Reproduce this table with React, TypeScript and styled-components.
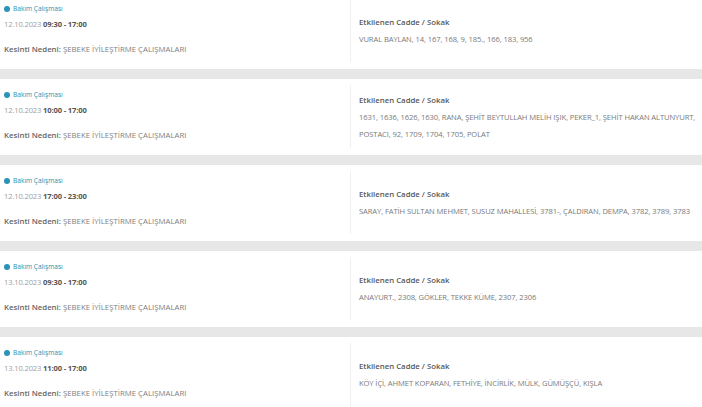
import { FC } from "react";
import styled, { createGlobalStyle } from "styled-components";

type Outage = {
  date: string;
  time: string;
  reason: string;
  streets: string;
};

const outages: Outage[] = [
  {
    date: "12.10.2023",
    time: "09:30 - 17:00",
    reason: "ŞEBEKE İYİLEŞTİRME ÇALIŞMALARI",
    streets: "VURAL BAYLAN, 14, 167, 168, 9, 185., 166, 183, 956",
  },
  {
    date: "12.10.2023",
    time: "10:00 - 17:00",
    reason: "ŞEBEKE İYİLEŞTİRME ÇALIŞMALARI",
    streets:
      "1631, 1636, 1626, 1630, RANA, ŞEHİT BEYTULLAH MELİH IŞIK, PEKER_1, ŞEHİT HAKAN ALTUNYURT, POSTACI, 92, 1709, 1704, 1705, POLAT",
  },
  {
    date: "12.10.2023",
    time: "17:00 - 23:00",
    reason: "ŞEBEKE İYİLEŞTİRME ÇALIŞMALARI",
    streets:
      "SARAY, FATİH SULTAN MEHMET, SUSUZ MAHALLESİ, 3781-, ÇALDIRAN, DEMPA, 3782, 3789, 3783",
  },
  {
    date: "13.10.2023",
    time: "09:30 - 17:00",
    reason: "ŞEBEKE İYİLEŞTİRME ÇALIŞMALARI",
    streets: "ANAYURT., 2308, GÖKLER, TEKKE KÜME, 2307, 2306",
  },
  {
    date: "13.10.2023",
    time: "11:00 - 17:00",
    reason: "ŞEBEKE İYİLEŞTİRME ÇALIŞMALARI",
    streets: "KÖY İÇİ, AHMET KOPARAN, FETHİYE, İNCİRLİK, MÜLK, GÜMÜŞÇÜ, KIŞLA",
  },
];

const OutageCard: FC<{ item: Outage }> = ({ item }) => (
  <Card>
    <Info>
      <Type>
        <Dot />
        Bakım Çalışması
      </Type>
      <When>
        {item.date} <b>{item.time}</b>
      </When>
      <Reason>
        <b>Kesinti Nedeni:</b> {item.reason}
      </Reason>
    </Info>
    <Streets>
      <StreetsTitle>Etkilenen Cadde / Sokak</StreetsTitle>
      <StreetList>{item.streets}</StreetList>
    </Streets>
  </Card>
);

const App: FC = () => (
  <>
    <GlobalStyle />
    <List>
      {outages.map((o, i) => (
        <OutageCard key={i} item={o} />
      ))}
    </List>
  </>
);

const GlobalStyle = createGlobalStyle`
  html, body {
    margin: 0;
    padding: 0;
    background: #e7e7e7;
    font-family: "Open Sans", "Noto Sans", sans-serif;
    overflow: hidden;
  }
`;

const List = styled.div`
  margin-top: -7px;
  display: flex;
  flex-direction: column;
  gap: 10px;
`;

const Card = styled.div`
  background: #fff;
  display: grid;
  grid-template-columns: 350px 1fr;
  min-height: 76px;
`;

const Info = styled.div`
  padding: 9px 0 11px 4px;
  display: flex;
  flex-direction: column;
`;

const Type = styled.div`
  display: flex;
  align-items: center;
  gap: 3px;
  font-size: 6.6px;
  line-height: 14px;
  color: #2a8fae;
`;

const Dot = styled.span`
  width: 6px;
  height: 6px;
  border-radius: 50%;
  background: #2b93b5;
`;

const When = styled.div`
  font-size: 7.6px;
  line-height: 16px;
  color: #a0a0a0;
  letter-spacing: -0.15px;

  b {
    color: #555;
    font-weight: 700;
  }
`;

const Reason = styled.div`
  margin-top: 9px;
  font-size: 7.8px;
  line-height: 16px;
  color: #808080;

  b {
    color: #666;
    font-weight: 600;
  }
`;

const Streets = styled.div`
  margin: 6px 0 7px;
  border-left: 1px solid #f0f0f0;
  padding: 0 2px 0 8px;
  display: flex;
  flex-direction: column;
  justify-content: center;
`;

const StreetsTitle = styled.div`
  font-size: 7.8px;
  line-height: 18px;
  font-weight: 600;
  color: #585858;
`;

const StreetList = styled.div`
  font-size: 7.6px;
  line-height: 17px;
  color: #7a7a7a;
  letter-spacing: -0.1px;
`;

export default App;
